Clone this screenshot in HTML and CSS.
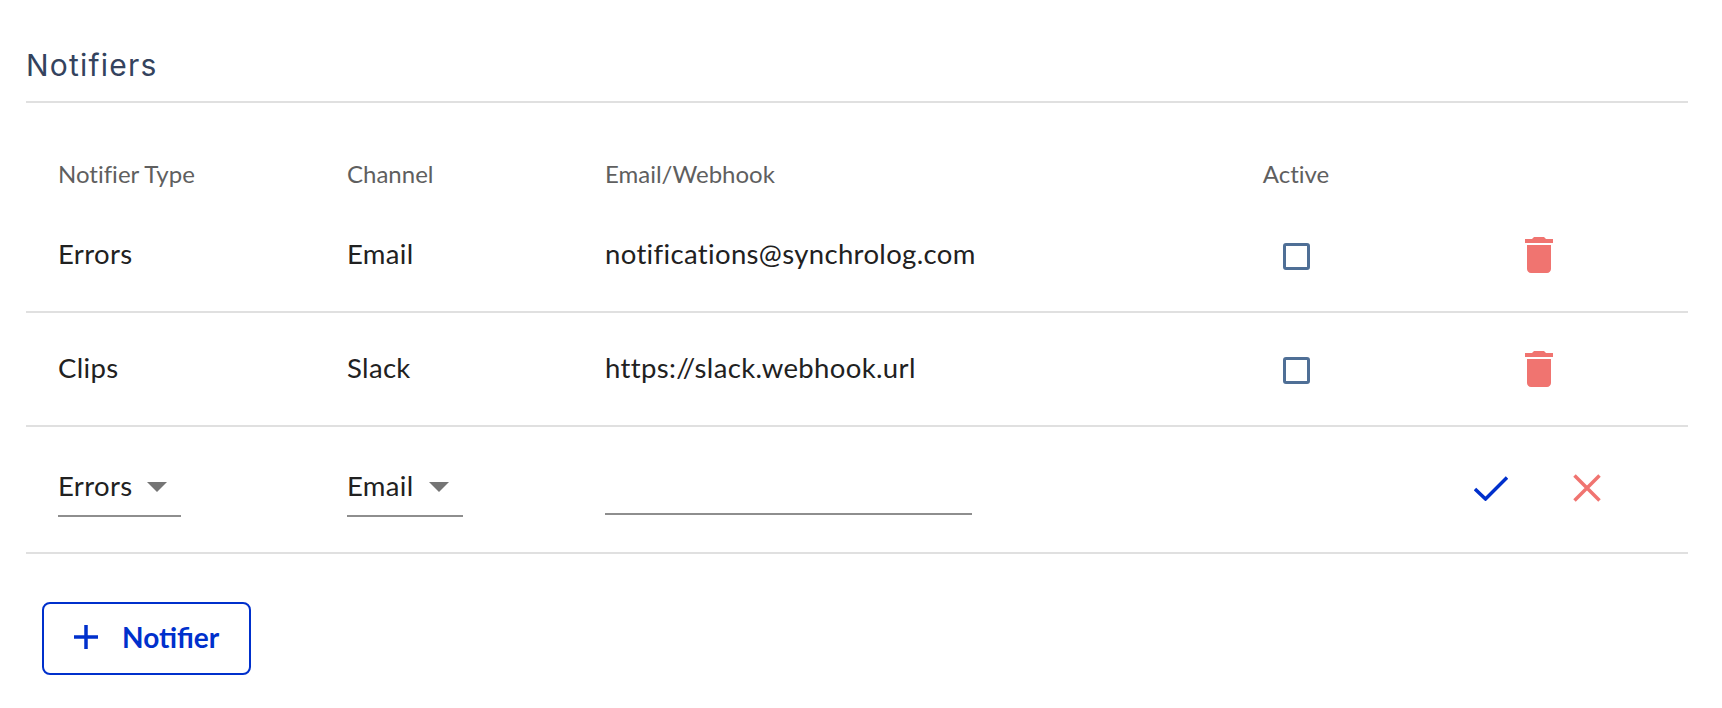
FILE: index.html
```html
<!DOCTYPE html>
<html lang="en">
<head>
    <meta charset="UTF-8">
    <meta name="viewport" content="width=device-width, initial-scale=1.0">
    <title>Notifiers</title>
    <link rel="stylesheet" href="styles.css">
</head>
<body>
    <div class="section">
        <h2 class="section-title">Notifiers</h2>

        <div class="row header-row">
            <div>Notifier Type</div>
            <div>Channel</div>
            <div>Email/Webhook</div>
            <div class="active-cell">Active</div>
            <div></div>
        </div>

        <div class="row data-row first-row">
            <div>Errors</div>
            <div>Email</div>
            <div>notifications@synchrolog.com</div>
            <div class="active-cell"><input type="checkbox" class="checkbox"></div>
            <div class="trash-cell">
                <svg class="icon-trash" viewBox="5 3 14 18"><path d="M6 19c0 1.1.9 2 2 2h8c1.1 0 2-.9 2-2V7H6v12zM19 4h-3.5l-1-1h-5l-1 1H5v2h14V4z"/></svg>
            </div>
        </div>

        <div class="row data-row">
            <div>Clips</div>
            <div>Slack</div>
            <div>https://slack.webhook.url</div>
            <div class="active-cell"><input type="checkbox" class="checkbox"></div>
            <div class="trash-cell">
                <svg class="icon-trash" viewBox="5 3 14 18"><path d="M6 19c0 1.1.9 2 2 2h8c1.1 0 2-.9 2-2V7H6v12zM19 4h-3.5l-1-1h-5l-1 1H5v2h14V4z"/></svg>
            </div>
        </div>

        <div class="row edit-row">
            <div class="select select-type">Errors<span class="caret"></span></div>
            <div class="select select-channel">Email<span class="caret"></span></div>
            <div class="text-input"></div>
            <div></div>
            <div class="edit-actions">
                <svg class="icon-check" viewBox="0 0 34 25"><path d="M1 13l10.500 10L33 1.500"/></svg>
                <svg class="icon-close" viewBox="0 0 28 28"><path d="M1.500 1.500l25 25M26.500 1.500l-25 25"/></svg>
            </div>
        </div>

        <button class="add-button" type="button">
            <svg class="icon-plus" viewBox="0 0 24 24"><path d="M12 0v24M0 12h24"/></svg>
            Notifier
        </button>
    </div>
</body>
</html>
```

FILE: styles.css
```css
body {
    margin: 0;
    font-family: "Lato", "Open Sans", sans-serif;
    font-variant-ligatures: none;
    background-color: white;
    color: #212121;
}
.section {
    padding: 40px 34px 0 26px;
}
.section-title {
    margin: 0;
    padding-bottom: 14px;
    border-bottom: 2px solid #e0e0e0;
    font-family: "Inter", sans-serif;
    font-size: 30px;
    line-height: 51px;
    height: 47px;
    font-weight: 400;
    letter-spacing: 1.200px;
    color: #34435e;
}
.row {
    display: grid;
    box-sizing: border-box;
    grid-template-columns: 289px 258px 621px 140px 1fr;
    padding-left: 32px;
    align-items: center;
}
.header-row {
    padding-top: 55px;
    font-size: 24px;
    line-height: 32px;
    color: #5f5f5f;
}
.data-row {
    height: 114px;
    padding-bottom: 3px;
    font-size: 27.500px;
    letter-spacing: 0.350px;
    border-bottom: 2px solid #e0e0e0;
}
.first-row {
    height: 123px;
    padding-top: 6px;
    padding-bottom: 0;
}
.active-cell {
    text-align: center;
}
.checkbox {
    appearance: none;
    display: block;
    box-sizing: border-box;
    width: 27px;
    height: 27px;
    margin: 6px auto 0;
    border: 3px solid #4f6f96;
    border-radius: 3px;
    background-color: white;
}
.trash-cell {
    padding: 2px 0 0 159px;
    line-height: 0;
}
.icon-trash {
    width: 28px;
    height: 36px;
    fill: #f07470;
}
.edit-row {
    height: 127px;
    font-size: 27.500px;
    letter-spacing: 0.350px;
    border-bottom: 2px solid #e0e0e0;
}
.select {
    display: flex;
    align-items: center;
    justify-content: space-between;
    box-sizing: border-box;
    height: 52px;
    padding: 0 14px 8px 0;
    border-bottom: 2px solid #8e8e8e;
    margin-top: 2px;
}
.select-type {
    width: 123px;
}
.select-channel {
    width: 116px;
}
.caret {
    width: 0;
    height: 0;
    margin-top: 3px;
    border-left: 10px solid transparent;
    border-right: 10px solid transparent;
    border-top: 10px solid #757575;
}
.text-input {
    box-sizing: border-box;
    width: 367px;
    height: 50px;
    border-bottom: 2px solid #8e8e8e;
}
.edit-actions {
    display: flex;
    align-items: center;
    gap: 65px;
    padding: 0 0 3px 108px;
}
.icon-check {
    width: 34px;
    height: 25px;
    fill: none;
    stroke: #0030cc;
    stroke-width: 3.500;
}
.icon-close {
    width: 28px;
    height: 28px;
    fill: none;
    stroke: #f07470;
    stroke-width: 3.500;
}
.add-button {
    display: flex;
    align-items: center;
    gap: 24px;
    box-sizing: border-box;
    width: 209px;
    height: 73px;
    margin: 48px 0 0 16px;
    padding: 0 0 3px 30px;
    border: 2px solid #0030cc;
    border-radius: 8px;
    background-color: white;
    font-family: inherit;
    font-size: 28px;
    font-weight: 700;
    color: #0030cc;
}
.icon-plus {
    width: 24px;
    height: 24px;
    fill: none;
    stroke: #0030cc;
    stroke-width: 3.500;
}
```
